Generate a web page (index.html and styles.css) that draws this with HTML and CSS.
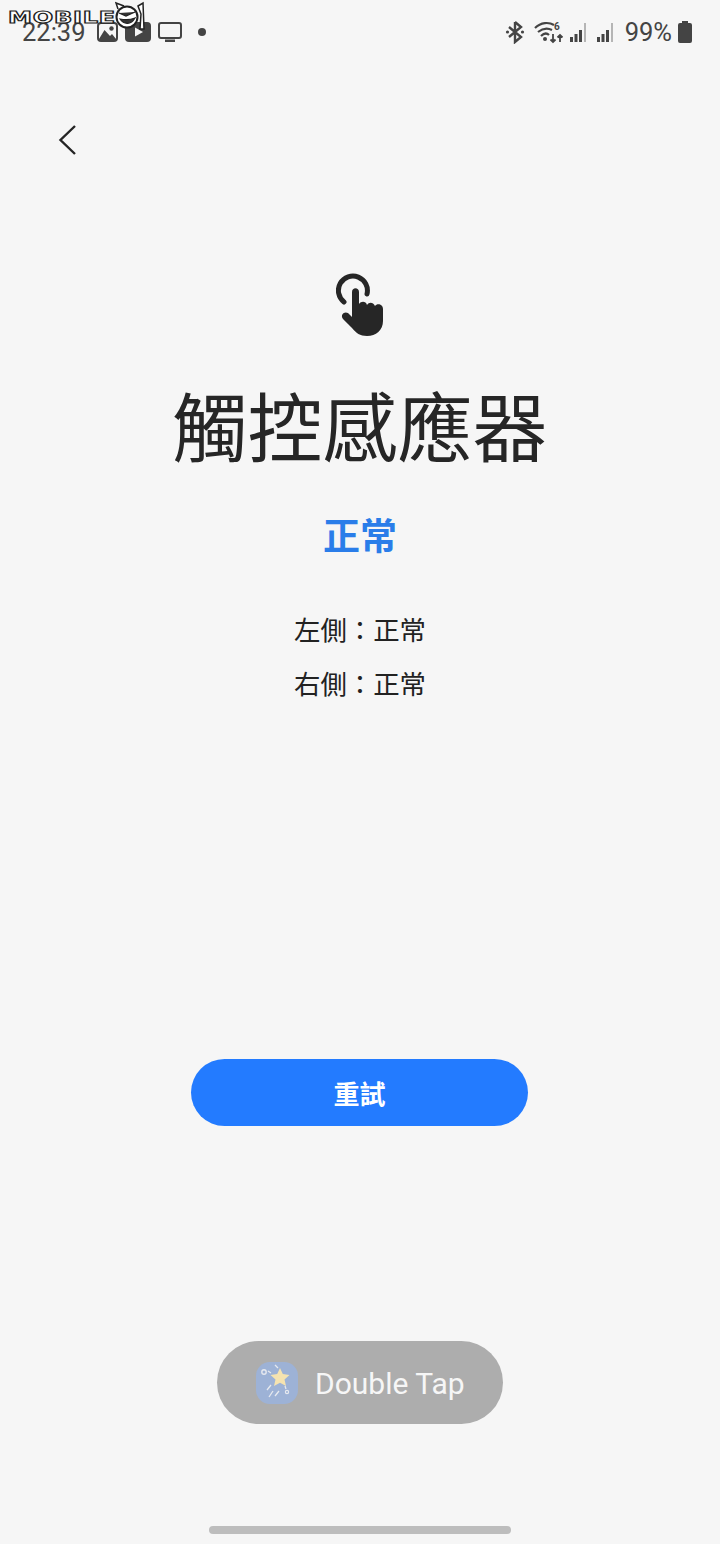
FILE: index.html
```html
<!DOCTYPE html>
<html lang="zh-Hant">
<head>
<meta charset="utf-8">
<title>觸控感應器</title>
<link rel="stylesheet" href="styles.css">
</head>
<body>
<div class="page">
  <div class="watermark">
    <span class="wm-text">MOBILE</span>
    <svg class="wm-face" width="38" height="34" viewBox="0 0 38 34">
      <path d="M3 8 L1 2 L9 5" fill="#fff" stroke="#222" stroke-width="1.500"/>
      <circle cx="12" cy="16" r="10.500" fill="#fff" stroke="#222" stroke-width="2"/>
      <path d="M4 12 L11 15 L20 11 M5 18 C9 24 16 24 20 17 C15 19 10 19 5 18Z" fill="#333" stroke="#222" stroke-width="1.200"/>
      <path d="M23 5 L28 2 L29 28 L25 28 L26 13 Z" fill="#fff" stroke="#222" stroke-width="1.500"/>
    </svg>
  </div>

  <header class="status">
    <div class="status-left">
      <span class="clock">22:39</span>
      <svg class="ic-photo" width="21" height="20" viewBox="0 0 21 20"><rect x="1" y="1" width="19" height="18" rx="3" fill="none" stroke="#444" stroke-width="2"/><circle cx="14.500" cy="6.500" r="2.200" fill="#444"/><path d="M2 17 L7.500 8 L13 14 L15 12 L19 17 V18 H2Z" fill="#444"/></svg>
      <svg class="ic-video" width="26" height="20" viewBox="0 0 26 20"><rect width="26" height="20" rx="4" fill="#444"/><path d="M10 5.500 L18 10 L10 14.500Z" fill="#f6f6f6"/></svg>
      <svg class="ic-tv" width="24" height="20" viewBox="0 0 24 20"><rect x="1" y="1" width="22" height="15" rx="2" fill="none" stroke="#444" stroke-width="2"/><rect x="7" y="17.500" width="10" height="2.500" fill="#444"/></svg>
      <span class="dot"></span>
    </div>
    <div class="status-right">
      <svg width="20" height="24" viewBox="0 0 20 24"><path d="M10 2 V22 L16 17 L4 7 M10 2 L16 7 L4 17" fill="none" stroke="#444" stroke-width="2.400"/><circle cx="2.500" cy="12" r="1.600" fill="#444"/><circle cx="17.500" cy="12" r="1.600" fill="#444"/></svg>
      <svg class="wifi" width="30" height="24" viewBox="0 0 30 24"><path d="M1 8 C7 2 15 2 20 5 M4 12 C9 8 14 8 18 10 M7 16 C10 13 13 13 15 15" fill="none" stroke="#444" stroke-width="2.200"/><circle cx="11" cy="19" r="2" fill="#444"/><path d="M19 14 V22 M16.500 19.500 L19 22 L21.500 19.500 M26 22 V15 M23.500 17.500 L26 15 L28.500 17.500" fill="none" stroke="#444" stroke-width="1.800"/><text x="20" y="10" class="wifi-num">6</text></svg>
      <svg class="sig" width="20" height="21" viewBox="0 0 20 21"><path d="M1 15h3v5H1zM5.500 12h3v8h-3zM10 8h3v12h-3z" fill="#444"/><rect x="15" y="1" width="2" height="19" fill="#b5b5b5"/></svg>
      <svg class="sig sig2" width="20" height="21" viewBox="0 0 20 21"><path d="M1 15h3v5H1zM5.500 12h3v8h-3zM10 8h3v12h-3z" fill="#444"/><rect x="15" y="1" width="2" height="19" fill="#b5b5b5"/></svg>
      <span class="batt-text">99%</span>
      <svg class="batt" width="14" height="22" viewBox="0 0 14 22"><path d="M4 0h6v2h2a2 2 0 0 1 2 2v16a2 2 0 0 1-2 2H2a2 2 0 0 1-2-2V4a2 2 0 0 1 2-2h2z" fill="#444"/></svg>
    </div>
  </header>

  <nav class="nav">
    <svg width="20" height="32" viewBox="0 0 20 32"><path d="M17 2 L2.500 16 L17 30" fill="none" stroke="#252525" stroke-width="2.400"/></svg>
  </nav>

  <main class="content">
    <svg class="touch" width="52" height="66" viewBox="0 0 52 66">
      <path d="M8 29 A14.500 14.500 0 1 1 31 21" fill="none" stroke="#262626" stroke-width="5" stroke-linecap="round"/>
      <path d="M16 19 C16 14 23 14 23 19 V31 C25 28 30 28 31 32 C33 29 37 29 39 33 C41 30 47 31 47 36 V48 C47 57 40 63 31 63 C24 63 20 60 16 55 L7 46 C4 42 8 38 12 40 L16 44 Z" fill="#262626"/>
    </svg>
    <h1 class="title">觸控感應器</h1>
    <p class="state">正常</p>
    <p class="side first">左側：正常</p>
    <p class="side">右側：正常</p>
    <button class="retry">重試</button>
    <div class="toast">
      <svg width="44" height="44" viewBox="0 0 44 44">
        <rect x="1" y="1" width="42" height="42" rx="14" fill="#9db2d6"/>
        <path d="M25 7 L27.800 13 L34.500 14 L29.500 18.500 L31 25 L25 21.800 L19 25 L20.500 18.500 L15.500 14 L22.200 13Z" fill="#f5e3b0"/>
        <circle cx="9" cy="11" r="2.200" fill="none" stroke="#e6e9ef" stroke-width="1.400"/>
        <circle cx="32" cy="31" r="1.600" fill="none" stroke="#e6e9ef" stroke-width="1.200"/>
        <path d="M13 10 L16 12 M20 4 L23 7 M16 24 L12 29 M18 30 L14 36 M24 30 L20 35 M30 25 L31 28" stroke="#e6e9ef" stroke-width="1.300" fill="none"/>
      </svg>
      <span class="toast-text">Double Tap</span>
    </div>
  </main>

  <div class="home"></div>
</div>
</body>
</html>
```

FILE: styles.css
```css
* { box-sizing: border-box; }
html, body { margin: 0; padding: 0; }
body {
  width: 720px;
  height: 1544px;
  background: #f6f6f6;
  overflow: hidden;
  font-family: "Noto Sans CJK TC", "Noto Sans", sans-serif;
}
.page {
  position: relative;
  width: 720px;
  height: 1544px;
  display: flex;
  flex-direction: column;
}
.watermark {
  position: absolute;
  left: 8px;
  top: 1px;
  display: flex;
  align-items: center;
  z-index: 2;
}
.wm-text {
  font-family: "DejaVu Sans", sans-serif;
  font-size: 15px;
  font-weight: 700;
  line-height: 16px;
  letter-spacing: 0.500px;
  color: #fff;
  -webkit-text-stroke: 1px #222;
  transform: scaleX(1.600);
  transform-origin: left center;
  width: 107px;
  white-space: nowrap;
}
.status {
  height: 60px;
  padding: 4px 28px 0 22px;
  display: flex;
  justify-content: space-between;
  align-items: center;
  flex: none;
}
.status-left, .status-right { display: flex; align-items: center; }
.clock {
  font-family: Roboto, sans-serif;
  font-size: 25.500px;
  color: #444;
  width: 75px;
}
.ic-video { margin-left: 7px; }
.ic-tv { margin-left: 7px; }
.dot {
  width: 8px;
  height: 8px;
  border-radius: 50%;
  background: #444;
  margin-left: 16px;
}
.wifi { margin-left: 9px; }
.sig { margin-left: 5px; }
.sig2 { margin-left: 7px; }
.wifi-num { font: 700 10px Roboto, sans-serif; fill: #444; }
.batt-text {
  font-family: Roboto, sans-serif;
  font-size: 25.500px;
  color: #444;
  margin-left: 9px;
  margin-right: 6px;
}
.nav {
  height: 60px;
  padding: 0 0 0 58px;
  margin-top: 50px;
  display: flex;
  align-items: center;
  flex: none;
}
.content {
  flex: 1;
  display: flex;
  flex-direction: column;
  align-items: center;
}
.touch { margin-top: 103px; margin-left: 4px; flex: none; }
.title {
  margin: 37px 0 0;
  font-size: 75px;
  font-weight: 400;
  line-height: 96px;
  color: #262626;
}
.state {
  margin: 37px 0 0;
  font-size: 37px;
  font-weight: 700;
  line-height: 50px;
  color: #2a7de9;
}
.side {
  margin: 16px 0 0;
  font-size: 26.400px;
  line-height: 38px;
  color: #222;
}
.side.first { margin-top: 51px; }
.retry {
  margin-top: 357px;
  margin-right: 1px;
  width: 337px;
  height: 67px;
  border: 0;
  border-radius: 34px;
  background: #237bff;
  color: #fff;
  font-family: inherit;
  font-size: 26px;
  font-weight: 700;
}
.toast {
  margin-top: 215px;
  width: 286px;
  height: 83px;
  border-radius: 42px;
  background: #adadad;
  display: flex;
  align-items: center;
  padding-left: 38px;
  gap: 16px;
}
.toast-text {
  font-family: Roboto, sans-serif;
  font-size: 30px;
  color: #f6f6f6;
  margin-top: 2px;
}
.home {
  position: absolute;
  left: 209px;
  top: 1526px;
  width: 302px;
  height: 8px;
  border-radius: 4px;
  background: #bdbdbd;
}
```
